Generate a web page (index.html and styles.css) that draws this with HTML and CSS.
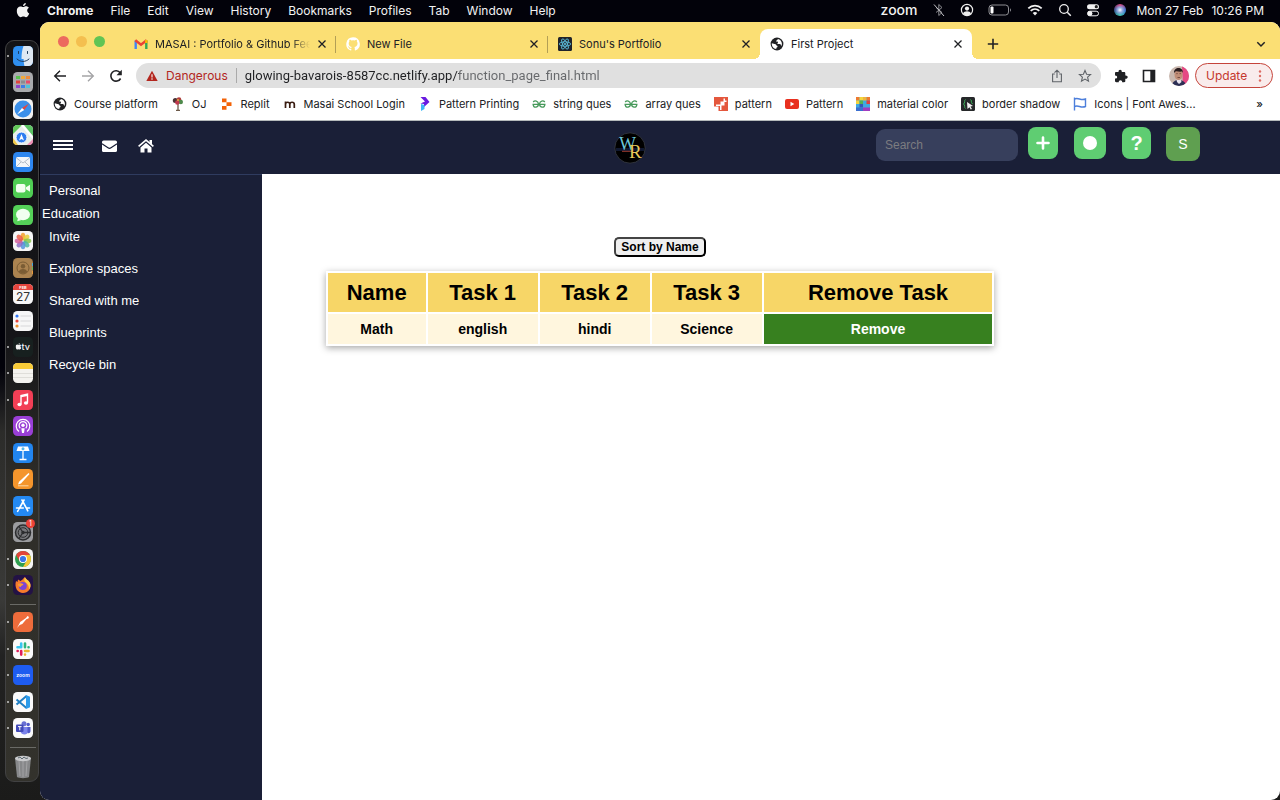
FILE: index.html
```html
<!DOCTYPE html>
<html lang="en">
<head>
  <meta charset="UTF-8">
  <meta name="viewport" content="width=device-width, initial-scale=1.0">
  <title>First Project</title>
  <link rel="stylesheet" href="styles.css">
</head>
<body>

  <!-- shared icons -->
  <svg class="defs" width="0" height="0">
    <symbol id="globe" viewBox="0 0 14 14">
      <circle cx="7" cy="7" r="6.4" fill="#202124"/>
      <path d="M1.8 6.2c1.500 .2 2.300 1 3.700 1 .8.200.7 1.200 1.500 1.500.9.300.6 1.500-.300 1.800-.4.300-.3 1-.5 1.500C3.700 11.600 1.600 9.400 1.800 6.200z" fill="#fff"/>
      <path d="M8 1.900c-.2 1-1.700 1.100-1.800 2 .1.800 1.700.3 1.900 1.100.2.900-1.300 1-.6 1.700.8.600 2.200-.2 3 .6.500.600.300 1.300.9 1.700C12.700 6.500 11.500 2.600 8 1.900z" fill="#fff"/>
    </symbol>
    <symbol id="close" viewBox="0 0 10 10">
      <path d="M1.500 1.500l7 7M8.500 1.500l-7 7" stroke="#202124" stroke-width="1.300" fill="none"/>
    </symbol>
    <symbol id="geeks" viewBox="0 0 14 14">
      <path d="M.5 7.300h13M1.200 5c1.500-1.800 5-1.300 5.200 1.800.3 4-4.600 4.600-5.200 1M12.800 5c-1.500-1.800-5-1.300-5.200 1.800-.3 4 4.600 4.600 5.200 1" stroke="#46995a" stroke-width="1.300" fill="none"/>
    </symbol>
    <symbol id="apple" viewBox="0 0 14 16">
      <path d="M10 0c.1 1.700-1.300 3.300-3 3.300C6.800 1.700 8.400.2 10 0zM7.200 4.300c.7 0 1.600-.8 3-.8 1.200 0 2.300.6 3 1.600-2.500 1.600-2.100 4.900.5 6-.7 1.900-2.100 4-3.500 4-1.100 0-1.500-.7-2.800-.7s-1.700.7-2.800.7C2.500 15.100.3 11.500.3 8.300c0-3 1.900-4.700 3.900-4.700 1.300 0 2.200.7 3 .7z" fill="#f2f2f2"/>
    </symbol>
  </svg>

  <header class="menubar">
    <svg class="apple-logo" viewBox="0 0 14 16"><use href="#apple"/></svg>
    <button class="menu app-name">Chrome</button>
    <button class="menu">File</button>
    <button class="menu">Edit</button>
    <button class="menu">View</button>
    <button class="menu">History</button>
    <button class="menu">Bookmarks</button>
    <button class="menu">Profiles</button>
    <button class="menu">Tab</button>
    <button class="menu">Window</button>
    <button class="menu">Help</button>
    <div class="status">
      <span class="zoom-word">zoom</span>
      <svg class="status-icon" viewBox="0 0 14 14"><path d="M4 4.500l6 5-3.200 3V1.500l3.200 3-6 5" stroke="#8d8d92" fill="none"/><path d="M2 1.500l10 11.500" stroke="#c4c4c8" fill="none"/></svg>
      <svg class="status-icon" viewBox="0 0 14 14"><circle cx="7" cy="7" r="5.600" stroke="#eee" stroke-width="1.200" fill="none"/><circle cx="7" cy="5.600" r="2.100" fill="#eee"/><path d="M3 10.500c1-3 7-3 8 0-2 2.600-6 2.600-8 0z" fill="#eee"/></svg>
      <svg class="battery" viewBox="0 0 24 12"><rect x="1" y="1" width="19.500" height="10" rx="3" stroke="#8e8e93" fill="none"/><rect x="2.500" y="2.500" width="3" height="7" rx="1" fill="#fff"/><path d="M22 4.300v3.400c1.300-.6 1.300-2.800 0-3.400z" fill="#8e8e93"/></svg>
      <svg class="wifi" viewBox="0 0 16 14"><path d="M1.300 5.400c3.800-3.700 9.600-3.700 13.400 0M3.700 7.900c2.500-2.400 6.100-2.400 8.600 0" stroke="#f2f2f2" stroke-width="1.800" fill="none"/><path d="M5.700 10c1.400-1.300 3.200-1.300 4.600 0L8 12.400z" fill="#f2f2f2"/></svg>
      <svg class="status-icon" viewBox="0 0 14 14"><circle cx="6" cy="6" r="4.300" stroke="#eee" stroke-width="1.300" fill="none"/><path d="M9.300 9.300l3.500 3.500" stroke="#eee" stroke-width="1.500"/></svg>
      <svg class="status-icon" viewBox="0 0 14 14"><rect x="1" y="1.200" width="12" height="5" rx="2.500" fill="#f2f2f2"/><circle cx="10.300" cy="3.700" r="1.600" fill="#222"/><rect x="1.500" y="8.200" width="11" height="4.600" rx="2.300" stroke="#f2f2f2" fill="none"/><circle cx="4" cy="10.500" r="2.400" fill="#f2f2f2"/></svg>
      <span class="siri"></span>
      <span class="clock"><span>Mon 27 Feb</span><span>10:26 PM</span></span>
    </div>
  </header>

  <div class="desktop">

    <aside class="dock">
      <div class="dock-group main-apps">
        <!-- finder -->
        <span class="app running"><svg viewBox="0 0 20 20"><rect width="20" height="20" rx="4.500" fill="#2f8ff0"/><path d="M10.500 0h5A4.500 4.500 0 0 1 20 4.500v11a4.500 4.500 0 0 1-4.500 4.500h-4c-.7-2.500-.9-5-.9-7H8.500C8.500 8 9 4 10.500 0z" fill="#dfe9f3"/><path d="M5.500 5.500v2M14.500 5.500v2M4 13c3.300 3.300 8.700 3.300 12 0" stroke="#1c3a5c" fill="none" stroke-linecap="round"/></svg></span>
        <!-- launchpad -->
        <span class="app"><svg viewBox="0 0 20 20"><rect width="20" height="20" rx="4.500" fill="#a9aaad"/><g><path d="M3 4h4v3H3z" fill="#59c34f"/><path d="M8 4h4v3H8z" fill="#f0a93a"/><path d="M13 4h4v3h-4z" fill="#ef8a3c"/><path d="M3 8.500h4v3H3z" fill="#e0443c"/><path d="M8 8.500h4v3H8z" fill="#8b8c90"/><path d="M13 8.500h4v3h-4z" fill="#e84a6a"/><path d="M3 13h4v3H3z" fill="#8e44c9"/><path d="M8 13h4v3H8z" fill="#3b7fe8"/><path d="M13 13h4v3h-4z" fill="#4fc3d9"/></g></svg></span>
        <!-- safari -->
        <span class="app"><svg viewBox="0 0 20 20"><rect width="20" height="20" rx="4.500" fill="#f1f1f1"/><circle cx="10" cy="10" r="8.500" fill="#3a8fea"/><path d="M16 4.500L11.200 11 9 9z" fill="#e8453c"/><path d="M4 15.500L9 9l2.200 2z" fill="#fff"/></svg></span>
        <!-- maps -->
        <span class="app"><svg viewBox="0 0 20 20"><rect width="20" height="20" rx="4.500" fill="#e9efe9"/><path d="M0 9V4.500A4.500 4.500 0 0 1 4.500 0H9z" fill="#62c858"/><path d="M11 0h4.500A4.500 4.500 0 0 1 20 4.500V11z" fill="#5cc463"/><path d="M9 0l11 13" stroke="#fff" stroke-width="2"/><path d="M0 13l5 7h-1A4 4 0 0 1 0 16z" fill="#f3c948"/><path d="M14 20l6-6v2a4 4 0 0 1-4 4z" fill="#ef8fb4"/><circle cx="8.500" cy="12.500" r="5.500" fill="#2f7df0" stroke="#fff"/><path d="M8.500 9l2.500 6.500-2.500-1.500L6 15.500z" fill="#fff"/></svg></span>
        <!-- mail -->
        <span class="app"><svg viewBox="0 0 20 20"><rect width="20" height="20" rx="4.500" fill="#2d86ee"/><rect x="3" y="5" width="14" height="10" rx="1.500" fill="#f3f6f9"/><path d="M3.500 6l6.500 5 6.500-5M3.500 14.500L8 10M16.500 14.500L12 10" stroke="#9aa6b3" stroke-width=".7" fill="none"/></svg></span>
        <!-- facetime -->
        <span class="app"><svg viewBox="0 0 20 20"><rect width="20" height="20" rx="4.500" fill="#4fce53"/><rect x="3" y="6" width="9.500" height="8.500" rx="2" fill="#f2fff0"/><path d="M13 9.300l4-2.500v7l-4-2.500z" fill="#f2fff0"/></svg></span>
        <!-- messages -->
        <span class="app"><svg viewBox="0 0 20 20"><rect width="20" height="20" rx="4.500" fill="#55d158"/><ellipse cx="10" cy="9.500" rx="7" ry="5.800" fill="#f0fff0"/><path d="M5 13l-.8 3.300L8.500 15z" fill="#f0fff0"/></svg></span>
        <!-- photos -->
        <span class="app"><svg viewBox="0 0 20 20"><rect width="20" height="20" rx="4.500" fill="#f6f6f6"/><g fill-opacity=".85"><ellipse cx="10" cy="5.500" rx="2.400" ry="3.800" fill="#f5a02c"/><ellipse cx="10" cy="5.500" rx="2.400" ry="3.800" fill="#e7cf3b" transform="rotate(45 10 10)"/><ellipse cx="10" cy="5.500" rx="2.400" ry="3.800" fill="#8ac64b" transform="rotate(90 10 10)"/><ellipse cx="10" cy="5.500" rx="2.400" ry="3.800" fill="#4db7a0" transform="rotate(135 10 10)"/><ellipse cx="10" cy="5.500" rx="2.400" ry="3.800" fill="#5494dd" transform="rotate(180 10 10)"/><ellipse cx="10" cy="5.500" rx="2.400" ry="3.800" fill="#8b6fc7" transform="rotate(225 10 10)"/><ellipse cx="10" cy="5.500" rx="2.400" ry="3.800" fill="#d4609d" transform="rotate(270 10 10)"/><ellipse cx="10" cy="5.500" rx="2.400" ry="3.800" fill="#ec5f4b" transform="rotate(315 10 10)"/></g></svg></span>
        <!-- contacts -->
        <span class="app"><svg viewBox="0 0 20 20"><rect width="20" height="20" rx="4.500" fill="#ab8350"/><circle cx="10" cy="10" r="6" fill="none" stroke="#7a5c34"/><circle cx="10" cy="8.200" r="2.200" fill="#7a5c34"/><path d="M5.800 13.500c1.500-3.300 6.900-3.300 8.400 0-2 2.800-6.400 2.800-8.400 0z" fill="#7a5c34"/><path d="M19.500 5v3" stroke="#4aa6d8"/><path d="M19.500 9v3" stroke="#65bd5c"/><path d="M19.500 13v3" stroke="#e89a3c"/></svg></span>
        <!-- calendar -->
        <span class="app"><svg viewBox="0 0 20 20"><rect width="20" height="20" rx="4.500" fill="#f7f7f7"/><path d="M0 6V4.500A4.500 4.500 0 0 1 4.500 0h11A4.500 4.500 0 0 1 20 4.500V6z" fill="#e4453d"/><text x="10" y="4.900" class="cal-month">FEB</text><text x="10" y="16.700" class="cal-day">27</text></svg></span>
        <!-- reminders -->
        <span class="app"><svg viewBox="0 0 20 20"><rect width="20" height="20" rx="4.500" fill="#f7f7f7"/><circle cx="4" cy="5" r="1.600" fill="#3478f6"/><circle cx="4" cy="10" r="1.600" fill="#e8453c"/><circle cx="4" cy="15" r="1.600" fill="#f0912f"/><path d="M7.500 5H18M7.500 10H18M7.500 15H18" stroke="#cfcfd2" stroke-width=".8"/></svg></span>
        <!-- tv -->
        <span class="app running"><svg viewBox="0 0 20 20"><rect width="20" height="20" rx="4.500" fill="#17201f"/><use href="#apple" x="2.500" y="6" width="6" height="7"/><text x="8.500" y="13" class="tv-word">tv</text></svg></span>
        <!-- notes -->
        <span class="app running"><svg viewBox="0 0 20 20"><rect width="20" height="20" rx="4.500" fill="#f4f3ef"/><path d="M0 6V4.500A4.500 4.500 0 0 1 4.500 0h11A4.500 4.500 0 0 1 20 4.500V6z" fill="#f8cb38"/><path d="M0 10.500h20M0 14.500h20" stroke="#d5d4d0" stroke-width=".7"/></svg></span>
        <!-- music -->
        <span class="app running"><svg viewBox="0 0 20 20"><rect width="20" height="20" rx="4.500" fill="#f23f55"/><path d="M8 14.200V5.600l6.500-1.400v8.600" stroke="#fff" stroke-width="1.400" fill="none"/><path d="M8 6.600l6.500-1.400" stroke="#fff" stroke-width="1.500"/><ellipse cx="6.500" cy="14.500" rx="2.100" ry="1.700" fill="#fff"/><ellipse cx="13" cy="13" rx="2.100" ry="1.700" fill="#fff"/></svg></span>
        <!-- podcasts -->
        <span class="app"><svg viewBox="0 0 20 20"><rect width="20" height="20" rx="4.500" fill="#9a3fd6"/><path d="M6 15.600a6.800 6.800 0 1 1 8 0M7.300 12.300a3.900 3.900 0 1 1 5.400 0" stroke="#fff" stroke-width="1.200" fill="none"/><circle cx="10" cy="9.300" r="1.700" fill="#fff"/><path d="M8.300 12.300h3.400L11 17H9z" fill="#fff"/></svg></span>
        <!-- keynote -->
        <span class="app"><svg viewBox="0 0 20 20"><rect width="20" height="20" rx="4.500" fill="#2285ee"/><path d="M5 3.500h10l1.500 4.500h-13z" fill="#fff"/><circle cx="10" cy="5.800" r="1.500" fill="#58b8e8"/><path d="M10 8v8M6.500 16.500h7" stroke="#fff" stroke-width="1.300"/></svg></span>
        <!-- pages -->
        <span class="app"><svg viewBox="0 0 20 20"><rect width="20" height="20" rx="4.500" fill="#f4952c"/><path d="M15.500 4l1 1-8.500 9.500-3 1 1-2.700z" fill="#fff"/><path d="M5 16.800h10.500" stroke="#fbd9a8"/></svg></span>
        <!-- app store -->
        <span class="app"><svg viewBox="0 0 20 20"><rect width="20" height="20" rx="4.500" fill="#2489f2"/><path d="M11 4L6 13M9 4l5.800 10.800M3.500 12h6.800M13.200 12h3.300M5.200 14.300l-.6 1" stroke="#fff" stroke-width="1.600" stroke-linecap="round" fill="none"/></svg></span>
        <!-- settings -->
        <span class="app"><svg viewBox="0 0 20 20"><rect width="20" height="20" rx="4.500" fill="#9b9c9f"/><circle cx="10" cy="10.500" r="7.500" fill="#77787b" stroke="#2c2d2f" stroke-width="1.500"/><circle cx="10" cy="10.500" r="4.800" fill="none" stroke="#2c2d2f"/><path d="M10 10.500h7M10 10.500l-4-6M10 10.500l-4 6" stroke="#2c2d2f" stroke-width="1.300"/><circle cx="10" cy="10.500" r="1.700" fill="#2c2d2f"/></svg><b class="badge">1</b></span>
        <!-- chrome -->
        <span class="app running"><svg viewBox="0 0 20 20"><rect width="20" height="20" rx="4.500" fill="#f4f4f4"/><circle cx="10" cy="10" r="8" fill="#2f9e4f"/><path d="M3.100 6a8 8 0 0 1 13.800 0H10L6.500 12z" fill="#e2453a"/><path d="M16.900 6A8 8 0 0 1 10 18l3.500-6L10 6z" fill="#f7c632"/><circle cx="10" cy="10" r="4" fill="#fff"/><circle cx="10" cy="10" r="3.100" fill="#3b78e7"/></svg></span>
        <!-- firefox -->
        <span class="app running"><svg viewBox="0 0 20 20"><rect width="20" height="20" rx="4.500" fill="#231245"/><path d="M3 6l1.500 1L5 4.500 7.500 6C9 5 10 4 12 2c.3 2 3.500 3 5 6 2 5-2 10-7 10S1 13 3 6z" fill="#f77b2c"/><path d="M12 2c.3 2 3.500 3 5 6 1 3 .3 5-1 6.500.3-4-2-6-4-7.500-1-1.500-.8-3.500 0-5z" fill="#fdcb45"/><circle cx="9.800" cy="11" r="4" fill="#7a45d6"/><path d="M5 9c2-1.500 4 0 5.500 0-.5 1.500-2.500 1.500-2.800 3C6 12 5 11 5 9z" fill="#fb9a33"/></svg></span>
      </div>
      <hr class="dock-line">
      <div class="dock-group other-apps">
        <!-- postman -->
        <span class="app running"><svg viewBox="0 0 20 20"><rect width="20" height="20" rx="4.500" fill="#ee6c3b"/><path d="M14.500 4c1.500.2 1.700 1.800.8 2.600l-2 .6-4 4.800-2.600 1L4 16l2.200-4 1-2L13 6z" fill="#fff"/></svg></span>
        <!-- slack -->
        <span class="app running"><svg viewBox="0 0 20 20"><rect width="20" height="20" rx="4.500" fill="#fafafa"/><g fill="none" stroke-width="2.600" stroke-linecap="round"><path d="M8.200 4.500v3.700M4.500 8.200H8" stroke="#36c5f0"/><path d="M12 4.500v3.700M15.500 8.200h.1" stroke="#2eb67d"/><path d="M12 12h3.500M12 15.500v.1" stroke="#ecb22e"/><path d="M8.200 12v3.600M4.600 12h.1" stroke="#e01e5a"/></g></svg></span>
        <!-- zoom -->
        <span class="app running"><svg viewBox="0 0 20 20"><rect width="20" height="20" rx="4.500" fill="#1e5cf0"/><text x="10" y="12" class="zoom-small">zoom</text></svg></span>
        <!-- vs code -->
        <span class="app running"><svg viewBox="0 0 20 20"><rect width="20" height="20" rx="4.500" fill="#fafafa"/><path d="M3.500 7.500l10 8.500M3.500 12.500l10-8.500" stroke="#1f7fc4" stroke-width="2"/><path d="M13 3l4 1.800v10.400L13 17z" fill="#2b9bea"/></svg></span>
        <!-- teams -->
        <span class="app running"><svg viewBox="0 0 20 20"><rect width="20" height="20" rx="4.500" fill="#fafafa"/><circle cx="11" cy="5.700" r="2.500" fill="#6970d4"/><circle cx="15.200" cy="6.500" r="1.700" fill="#5059c9"/><path d="M7.500 9H15v4.500c0 4-7 4-7.500 0z" fill="#7b83eb"/><path d="M14.500 9h3v4c0 2-1.800 2.500-3 2z" fill="#5059c9"/><rect x="3" y="6.500" width="7.500" height="7.500" rx="1" fill="#4149b8"/><path d="M5 8.600h3.600M6.800 8.600v3.700" stroke="#fff"/></svg></span>
      </div>
      <hr class="dock-line">
      <svg class="trash" viewBox="0 0 20 24"><path d="M2 3l2 19c2 1.500 10 1.500 12 0l2-19z" fill="#87888a"/><path d="M6 6l1 15M10 6v16M14 6l-1 15" stroke="#a9aaac" stroke-width=".8"/><ellipse cx="10" cy="3.500" rx="8" ry="2.700" fill="#c9cacc"/><path d="M5 3l2-1 2 2 2-2 2 1.500L15 3" stroke="#5d6a70" fill="none"/></svg>
    </aside>

    <section class="window">

      <div class="tabstrip">
        <div class="lights"><i class="red"></i><i class="amber"></i><i class="green"></i></div>
        <div class="tab">
          <svg class="favicon" viewBox="0 0 14 14"><path d="M1.700 12V3.500" stroke="#4285f4" stroke-width="2.400"/><path d="M12.300 12V3.500" stroke="#34a853" stroke-width="2.400"/><path d="M1.300 3.300L7 7.700l5.700-4.400" stroke="#ea4335" stroke-width="2.600" fill="none"/><path d="M12.300 6V3" stroke="#fbbc04" stroke-width="2.400"/></svg>
          <span class="tab-title fade">MASAI : Portfolio &amp; Github Feed</span>
          <button class="tab-close" aria-label="Close"><svg viewBox="0 0 10 10"><use href="#close"/></svg></button>
        </div>
        <div class="tab">
          <svg class="favicon" viewBox="0 0 14 14"><path d="M7 .3a6.800 6.800 0 0 0-2.200 13.200c.4.100.5-.1.500-.4v-1.400c-1.900.4-2.300-.8-2.300-.8-.3-.8-.8-1-.8-1-.6-.4.100-.4.100-.4.700 0 1.100.7 1.100.7.600 1 1.600.7 2 .6.100-.5.300-.8.500-.9-1.600-.2-3.200-.8-3.200-3.400 0-.8.3-1.400.7-1.900-.1-.2-.3-.9.100-1.800 0 0 .6-.2 1.900.7a6.500 6.500 0 0 1 3.400 0c1.300-.9 1.900-.7 1.900-.7.400.9.200 1.600.1 1.800.5.500.7 1.100.7 1.900 0 2.600-1.600 3.200-3.100 3.400.2.200.4.600.4 1.300v1.900c0 .2.100.5.500.4A6.800 6.800 0 0 0 7 .3z" fill="#fff"/></svg>
          <span class="tab-title">New File</span>
          <button class="tab-close" aria-label="Close"><svg viewBox="0 0 10 10"><use href="#close"/></svg></button>
        </div>
        <div class="tab">
          <svg class="favicon" viewBox="0 0 14 14"><rect width="14" height="14" rx="1.500" fill="#20232a"/><g fill="none" stroke="#61c9e8" stroke-width=".8"><ellipse cx="7" cy="7" rx="5.700" ry="2.200"/><ellipse cx="7" cy="7" rx="5.700" ry="2.200" transform="rotate(60 7 7)"/><ellipse cx="7" cy="7" rx="5.700" ry="2.200" transform="rotate(120 7 7)"/></g><circle cx="7" cy="7" r="1" fill="#61c9e8"/></svg>
          <span class="tab-title">Sonu's Portfolio</span>
          <button class="tab-close" aria-label="Close"><svg viewBox="0 0 10 10"><use href="#close"/></svg></button>
        </div>
        <div class="tab active">
          <svg class="favicon" viewBox="0 0 14 14"><use href="#globe"/></svg>
          <span class="tab-title">First Project</span>
          <button class="tab-close" aria-label="Close"><svg viewBox="0 0 10 10"><use href="#close"/></svg></button>
        </div>
        <button class="new-tab" aria-label="New tab"><svg viewBox="0 0 12 12"><path d="M6 .8v10.400M.8 6h10.400" stroke="#202124" stroke-width="1.600"/></svg></button>
        <button class="tab-search" aria-label="Search tabs"><svg viewBox="0 0 12 12"><path d="M2.300 4.300L6 8l3.700-3.700" stroke="#202124" stroke-width="1.500" fill="none"/></svg></button>
      </div>

      <div class="toolbar">
        <button class="tool" aria-label="Back"><svg viewBox="0 0 16 16"><path d="M14 8H2.800M8 2.700L2.700 8 8 13.300" stroke="#202124" stroke-width="1.400" fill="none"/></svg></button>
        <button class="tool" aria-label="Forward"><svg viewBox="0 0 16 16"><path d="M2 8h11.200M8 2.700L13.300 8 8 13.300" stroke="#a5a5a7" stroke-width="1.400" fill="none"/></svg></button>
        <button class="tool" aria-label="Reload"><svg viewBox="0 0 16 16"><path d="M12.600 10.500A5.200 5.200 0 1 1 12.200 4.800" stroke="#202124" stroke-width="1.600" fill="none"/><path d="M13.800 1.800v5.400H8.500z" fill="#202124"/></svg></button>
        <div class="omnibox">
          <svg class="warn" viewBox="0 0 12 12"><path d="M6 .8L11.700 11H.3z" fill="#b3261e"/><path d="M6 4.300v3.200M6 8.300v1.400" stroke="#fff" stroke-width="1.100"/></svg>
          <label class="danger" for="url">Dangerous</label>
          <input class="url" id="url" type="text" value="glowing-bavarois-8587cc.netlify.app/function_page_final.html">
          <svg class="omni-icon" viewBox="0 0 14 14"><path d="M4.800 5H2.600v7.800h8.800V5H9.200M7 9V1.300M4.500 3.600L7 1.200l2.500 2.400" stroke="#5f6368" stroke-width="1.100" fill="none"/></svg>
          <svg class="omni-icon" viewBox="0 0 14 14"><path d="M7 1.500l1.600 3.700 4 .3-3 2.700.9 4L7 10.100l-3.500 2.100.9-4-3-2.700 4-.3z" stroke="#5f6368" stroke-width="1.100" fill="none"/></svg>
        </div>
        <button class="tool" aria-label="Extensions"><svg viewBox="0 0 16 16"><path d="M2 5.300c0-.8.400-1.200 1.200-1.200h2.300c-.4-3.300 3.700-3.300 3.300 0h2.300c.8 0 1.200.4 1.200 1.200v2.200c3.200-.3 3.200 3.600 0 3.300v2.300c0 .8-.4 1.200-1.200 1.200H9.200c.2-2.900-3.700-2.900-3.500 0H3.200c-.8 0-1.200-.4-1.200-1.200v-2.500c2.900.2 2.900-3.300 0-3.100z" fill="#202124"/></svg></button>
        <button class="tool" aria-label="Side panel"><svg viewBox="0 0 16 16"><path d="M1.700 1.700h12.600v12.600H1.700zM3.300 3.300v9.400h6V3.300z" fill="#202124" fill-rule="evenodd"/></svg></button>
        <div class="profile">
          <svg class="avatar" viewBox="0 0 20 20"><defs><clipPath id="face"><circle cx="10" cy="10" r="10"/></clipPath></defs><g clip-path="url(#face)"><path d="M0 0h20v20H0z" fill="#c9b7ae"/><path d="M13 0h7v20h-6z" fill="#e54883"/><path d="M3 20c0-5 4-6 7-6s7 2 7 6z" fill="#2c2f55"/><path d="M7.500 13h4l1 3-2.500 2-2-2z" fill="#e9e4ee"/><ellipse cx="9.500" cy="8.500" rx="4" ry="5.500" fill="#c08d76"/><path d="M5 7c-.5-6 9-7 9 0l-1-1.500c-3 .5-5-.5-6.500 0z" fill="#2a1c1e"/><path d="M7.300 7.600h1.400M10.500 7.600h1.400M8.500 11.500h2.500" stroke="#5a3530" stroke-width=".7"/></g></svg>
          <button class="update">Update<svg viewBox="0 0 4 14"><circle cx="2" cy="2.500" r="1.200" fill="#dd6b62"/><circle cx="2" cy="7" r="1.200" fill="#dd6b62"/><circle cx="2" cy="11.500" r="1.200" fill="#dd6b62"/></svg></button>
        </div>
      </div>

      <nav class="bookmarks">
        <a href="#"><svg viewBox="0 0 14 14"><use href="#globe"/></svg>Course platform</a>
        <a href="#"><svg viewBox="0 0 14 14"><path d="M7 5v9M5 13.500h4" stroke="#6d5a4a" stroke-width="1.300"/><circle cx="4.300" cy="3.500" r="2.500" fill="#4a3436"/><circle cx="8" cy="2.500" r="2.300" fill="#b03a3a"/><circle cx="9.800" cy="5" r="2.200" fill="#4f8a4c"/><circle cx="6.300" cy="5.500" r="2.200" fill="#c0394f"/><circle cx="7" cy="3" r="1" fill="#e9a83c"/></svg>OJ</a>
        <a href="#"><svg viewBox="0 0 14 14"><path d="M2 1.500h4.500v3.700H2zM6.500 5.200H11.500v3.900H6.500zM2 9.100h4.500v3.700H2z" fill="#f26207"/></svg>Replit</a>
        <a href="#"><svg viewBox="0 0 14 14"><path d="M2.500 11V4.500M2.500 7.500c0-3 4.300-3 4.300 0V11M6.800 7.500c0-3 4.500-3 4.500 0V11" stroke="#3a1d12" stroke-width="1.700" fill="none"/></svg>Masai School Login</a>
        <a href="#"><svg viewBox="0 0 14 14"><path d="M2.500 0h5L11.500 5 6 10V7l-3.500-.5L7 4.500z" fill="#6a1be0"/><path d="M3 7l3.500 1v4L3 14z" fill="#3db8f5"/></svg>Pattern Printing</a>
        <a href="#"><svg viewBox="0 0 14 14"><use href="#geeks"/></svg>string ques</a>
        <a href="#"><svg viewBox="0 0 14 14"><use href="#geeks"/></svg>array ques</a>
        <a href="#"><svg viewBox="0 0 14 14"><path d="M0 0h14v14H4.500v-4.500H0z" fill="#e4573d"/><path d="M9.500 1.500v3h-3v3H2V9h4v4h1.500V8.500h3V5h2V3.500h-1.500v-2z" fill="#fff"/></svg>pattern</a>
        <a href="#"><svg viewBox="0 0 14 14"><rect y="2" width="14" height="10" rx="2" fill="#e8301f"/><path d="M5.500 4.800v4.400L9.300 7z" fill="#fff"/></svg>Pattern</a>
        <a href="#"><svg viewBox="0 0 14 14"><path d="M0 0h14v14H0z" fill="#3fa9e0"/><path d="M0 0h3.500v3.500H0zM10.500 0H14v3.500h-3.500z" fill="#ee7a30"/><path d="M3.500 0H7v3.500H3.500z" fill="#f3d53d"/><path d="M7 0h3.500v3.500H7z" fill="#f0b53b"/><path d="M0 3.500h3.500V7H0z" fill="#f5d33b"/><path d="M3.500 3.500H7V7H3.500z" fill="#52b255"/><path d="M10.500 3.500H14V7h-3.500z" fill="#e03f3f"/><path d="M3.500 7H7v3.500H3.500z" fill="#3656b8"/><path d="M0 10.500h7V14H0z" fill="#3b6fd0"/><path d="M7 10.500h7V14H7z" fill="#a13cc0"/></svg>material color</a>
        <a href="#"><svg viewBox="0 0 14 14"><rect width="14" height="14" rx="1.500" fill="#26282a"/><path d="M4.500 2.500C3 3 4.500 6 2.500 7c2 1 .5 4 2 4.500M9.500 2.500C11 3 9.500 5 11.500 7" stroke="#3cb55a" fill="none"/><path d="M6 5l6 4-2.500.5L11 12l-1.300.5-1.200-2.300L6.500 12z" fill="#f2f2f2"/></svg>border shadow</a>
        <a href="#"><svg viewBox="0 0 14 14"><path d="M1.500.500V13.500M1.500 2c4-2 6 2 11 0v7.500c-5 2-7-2-11 0" stroke="#4d7fdb" stroke-width="1.400" fill="none"/></svg>Icons | Font Awes...</a>
        <button class="more">»</button>
      </nav>

      <div class="page">
        <div class="navbar">
          <div class="nav-left">
            <button aria-label="Menu"><svg class="bars" viewBox="0 0 20 10"><path d="M0 1h20M0 5h20M0 9h20" stroke="#fff" stroke-width="1.800"/></svg></button>
            <button aria-label="Mail"><svg class="mail" viewBox="0 0 15 14"><rect y="1.500" width="15" height="11.500" rx="1.600" fill="#fff"/><path d="M0 4.800l6 4c1 .7 2 .7 3 0l6-4" stroke="#1a1f37" stroke-width="1.100" fill="none"/></svg></button>
            <button aria-label="Home"><svg class="home" viewBox="0 0 16 14"><path d="M.6 7.300L8 1.100l7.400 6.200" stroke="#fff" stroke-width="1.600" fill="none"/><path d="M11.500 1H14v4.500l-2.500-2zM8 3.800l5.500 4.700V13.500h-4v-4h-3v4h-4V8.500z" fill="#fff"/></svg></button>
          </div>
          <svg class="logo" viewBox="0 0 32 32"><circle cx="16" cy="16" r="15.200" fill="#000" stroke="#3a3d48" stroke-width=".8"/><path d="M2 16h28v3H2z" fill="#101830"/><path d="M8 19.300h10" stroke="#c44a3c" stroke-width=".8"/><text x="5" y="18" class="logo-w">W</text><text x="15" y="26" class="logo-r">R</text></svg>
          <div class="nav-right">
            <input class="search" type="search" placeholder="Search" aria-label="Search">
            <button class="sq plus" aria-label="Add"><svg viewBox="0 0 14 14"><path d="M7 1.500v11M1.500 7h11" stroke="#fff" stroke-width="2.600" stroke-linecap="round"/></svg></button>
            <button class="sq dot" aria-label="Notifications"><svg viewBox="0 0 14 14"><circle cx="7" cy="7" r="7" fill="#fff"/></svg></button>
            <button class="sq help">?</button>
            <button class="sq user">S</button>
          </div>
        </div>

        <div class="body">
          <div class="sidebar">
            <a href="#">Personal</a>
            <a href="#" class="education">Education</a>
            <a href="#">Invite</a>
            <a href="#" class="spaced">Explore spaces</a>
            <a href="#" class="spaced">Shared with me</a>
            <a href="#" class="spaced">Blueprints</a>
            <a href="#" class="spaced">Recycle bin</a>
          </div>

          <main class="content">
            <button class="sort">Sort by Name</button>
            <table class="tasks">
              <thead>
                <tr>
                  <th class="col-name">Name</th>
                  <th class="col-task">Task 1</th>
                  <th class="col-task">Task 2</th>
                  <th class="col-task">Task 3</th>
                  <th>Remove Task</th>
                </tr>
              </thead>
              <tbody>
                <tr>
                  <td>Math</td>
                  <td>english</td>
                  <td>hindi</td>
                  <td>Science</td>
                  <td class="remove"><button>Remove</button></td>
                </tr>
              </tbody>
            </table>
          </main>
        </div>
      </div>

    </section>
  </div>

</body>
</html>
```

FILE: styles.css
```css
* {
  box-sizing: border-box;
}

body {
  margin: 0;
  height: 100vh;
  display: flex;
  flex-direction: column;
  overflow: hidden;
  background: linear-gradient(#02020a 0, #02020a 46%, #2c2c2a 54%, #3a3a38 75%, #222 82%, #1b1b1a 100%);
  font-family: Inter, "Liberation Sans", sans-serif;
}

button {
  padding: 0;
  border: 0;
  background: none;
  font: inherit;
  color: inherit;
}

button svg {
  display: block;
}

a {
  color: inherit;
  text-decoration: none;
}

.defs {
  position: absolute;
}

/* menu bar */
.menubar {
  display: flex;
  align-items: center;
  gap: 17px;
  height: 22px;
  padding: 0 16px 2px;
  background: #02020a;
  color: #f2f2f2;
  font-size: 12px;
  white-space: nowrap;
}

.apple-logo {
  width: 14px;
  height: 15px;
}

.app-name {
  font-weight: 700;
}

.status {
  display: flex;
  align-items: center;
  gap: 14px;
  margin-left: auto;
}

.zoom-word {
  font-size: 14px;
  font-weight: 500;
  line-height: 16px;
}

.status-icon {
  width: 14px;
  height: 14px;
}

.battery {
  width: 24px;
  height: 12px;
}

.wifi {
  width: 16px;
  height: 14px;
  margin: 0 1px;
}

.siri {
  width: 12px;
  height: 12px;
  border-radius: 50%;
  background: radial-gradient(circle, #fff 0, #8fa8dd 30%, transparent 60%), conic-gradient(#d8477f, #3b6fd0, #3fc7b0, #35508f, #d8477f);
}

.clock {
  display: flex;
  gap: 8px;
  margin-left: -3px;
}

.desktop {
  flex: 1;
  min-height: 0;
  display: flex;
}

/* dock */
.dock {
  flex: none;
  width: 34px;
  margin: 18px 1px 18px 5px;
  padding: 5px 0 2px 2px;
  display: flex;
  flex-direction: column;
  align-items: center;
  border: 1px solid #414142;
  border-radius: 9px;
  background: linear-gradient(#141417 0, #151518 40%, #2e2d29 60%, #33322c 100%);
}

.dock-group {
  display: flex;
  flex-direction: column;
  justify-content: space-between;
}

.main-apps {
  flex: 5 0 auto;
}

.other-apps {
  flex: 1 0 auto;
}

.app {
  position: relative;
  width: 20px;
  height: 20px;
}

.app svg {
  display: block;
  width: 20px;
  height: 20px;
}

.running::before {
  content: "";
  position: absolute;
  left: -6px;
  top: 9px;
  width: 2px;
  height: 2px;
  border-radius: 50%;
  background: #c8c8c8;
}

.badge {
  position: absolute;
  top: -3px;
  right: -2px;
  width: 9px;
  height: 9px;
  border-radius: 50%;
  background: #ec4238;
  color: #fff;
  font-size: 7px;
  font-weight: 400;
  line-height: 9px;
  text-align: center;
}

.dock-line {
  width: 26px;
  height: 1px;
  margin: 9px 0 7px;
  border: 0;
  background: #6a6a66;
}

.trash {
  width: 20px;
  height: 24px;
}

.cal-month {
  fill: #fff;
  font-size: 4px;
  font-weight: 600;
  text-anchor: middle;
}

.cal-day {
  fill: #333;
  font-size: 12px;
  text-anchor: middle;
}

.tv-word {
  fill: #f2f2f2;
  font-size: 9px;
  font-weight: 500;
}

.zoom-small {
  fill: #fff;
  font-size: 5px;
  font-weight: 600;
  text-anchor: middle;
}

/* browser window */
.window {
  flex: 1;
  min-width: 0;
  display: flex;
  flex-direction: column;
  overflow: hidden;
  border-radius: 9px;
  background: #fff;
  color: #202124;
  font-size: 11px;
}

.tabstrip {
  display: flex;
  height: 37px;
  padding: 7px 13px 0 18px;
  background: #fbdf74;
}

.lights {
  display: flex;
  gap: 7px;
  width: 66px;
  padding-top: 7px;
}

.lights i {
  width: 11px;
  height: 11px;
  border-radius: 50%;
}

.red {
  background: #ec6a5e;
}

.amber {
  background: #f4bf4f;
}

.green {
  background: #61c454;
}

.tab {
  position: relative;
  display: flex;
  align-items: center;
  gap: 7px;
  width: 212px;
  padding: 0 9px 0 10px;
  border-radius: 8px 8px 0 0;
}

.tab:not(.active)::after {
  content: "";
  position: absolute;
  right: 0;
  top: 7px;
  width: 1px;
  height: 17px;
  background: #b39f55;
}

.tab:nth-child(4)::after {
  display: none;
}

.favicon {
  width: 14px;
  height: 14px;
}

.tab-title {
  flex: 1;
  overflow: hidden;
  white-space: nowrap;
}

.fade {
  -webkit-mask-image: linear-gradient(90deg, #000 88%, transparent);
  mask-image: linear-gradient(90deg, #000 88%, transparent);
}

.tab-close svg {
  width: 10px;
  height: 10px;
}

.active {
  background: #fff;
}

.active::before,
.active::after {
  content: "";
  position: absolute;
  bottom: 0;
  width: 6px;
  height: 6px;
}

.active::before {
  left: -6px;
  background: radial-gradient(circle at 0 0, #fbdf74 6px, #fff 6px);
}

.active::after {
  right: -6px;
  background: radial-gradient(circle at 100% 0, #fbdf74 6px, #fff 6px);
}

.new-tab {
  margin-left: 15px;
}

.new-tab svg,
.tab-search svg {
  width: 12px;
  height: 12px;
}

.tab-search {
  margin-left: auto;
}

.toolbar {
  display: flex;
  align-items: center;
  gap: 12px;
  padding: 4px 7px 3px 12px;
}

.tool svg {
  width: 16px;
  height: 16px;
}

.omnibox {
  flex: 1;
  display: flex;
  align-items: center;
  gap: 8px;
  height: 25px;
  padding: 0 9px 0 10px;
  border-radius: 13px;
  background: #e0e0e0;
  font-size: 12px;
}

.warn {
  width: 12px;
  height: 12px;
}

.danger {
  padding-right: 8px;
  border-right: 1px solid #aaa;
  color: #b3261e;
}

/* host in dark text, path in grey */
.url {
  flex: 1;
  min-width: 0;
  padding: 0;
  border: 0;
  outline: 0;
  font: 13px Roboto, sans-serif;
  color: #202124;
  background: linear-gradient(90deg, #202124 214px, #66686b 214px);
  -webkit-background-clip: text;
  background-clip: text;
  -webkit-text-fill-color: transparent;
}

.omni-icon {
  width: 14px;
  height: 14px;
  margin-left: 6px;
}

.profile {
  display: flex;
  align-items: center;
  gap: 6px;
}

.avatar {
  width: 20px;
  height: 20px;
}

.update {
  display: flex;
  align-items: center;
  justify-content: space-between;
  width: 78px;
  height: 25px;
  padding: 0 10px;
  border: 1px solid #c5443b;
  border-radius: 13px;
  background: #f9ecec;
  color: #c5372d;
  font-size: 12px;
}

.update svg {
  width: 4px;
  height: 14px;
}

.bookmarks {
  display: flex;
  align-items: center;
  gap: 13px;
  height: 30px;
  padding: 0 17px 4px 13px;
  border-bottom: 1px solid #b5babb;
  white-space: nowrap;
}

.bookmarks a {
  display: flex;
  align-items: center;
  gap: 7px;
}

.bookmarks svg {
  width: 14px;
  height: 14px;
}

.more {
  margin-left: auto;
  font-weight: 500;
}

/* task page */
.page {
  flex: 1;
  min-height: 0;
  display: flex;
  flex-direction: column;
  font-family: "Liberation Sans", Arial, sans-serif;
}

.navbar {
  display: flex;
  height: 53px;
  padding: 6px 80px 0 13px;
  background: #1a1f37;
  color: #fff;
}

.nav-left {
  display: flex;
  align-items: center;
  height: 36px;
  margin-right: 230px;
}

.bars {
  width: 20px;
  height: 10px;
}

.mail {
  width: 15px;
  height: 14px;
  margin: 2px 21px 0 29px;
}

.home {
  width: 16px;
  height: 14px;
  margin-top: 2px;
}

.logo {
  width: 32px;
  height: 32px;
  margin: 5px auto 0;
}

.logo-w {
  fill: #6cc5d8;
  font-family: "Liberation Serif", serif;
  font-size: 18px;
}

.logo-r {
  fill: #e8c95c;
  font-family: "Liberation Serif", serif;
  font-size: 19px;
}

.nav-right {
  display: flex;
  align-items: flex-start;
}

.search {
  width: 142px;
  height: 32px;
  margin: 2px 10px 0 0;
  padding: 0 9px;
  border: 0;
  border-radius: 9px;
  outline: 0;
  background: #373f5c;
  color: #fff;
  font: 12px "Liberation Sans", Arial, sans-serif;
}

.search::placeholder {
  color: #7c7c80;
}

.sq {
  display: flex;
  align-items: center;
  justify-content: center;
  height: 32px;
  border-radius: 8px;
  background: #5fcd72;
}

.sq svg {
  width: 14px;
  height: 14px;
}

.plus {
  width: 30px;
}

.dot {
  width: 32px;
  margin: 0 16px;
}

.help {
  width: 29px;
  margin-right: 15px;
  font-size: 20px;
  font-weight: 700;
}

.user {
  width: 34px;
  height: 34px;
  background: #5f9f50;
  font-size: 14px;
}

.body {
  flex: 1;
  display: flex;
}

.sidebar {
  display: flex;
  flex-direction: column;
  flex: none;
  width: 222px;
  padding: 8px 9px;
  border-top: 1px solid #2f3b5f;
  background: #1a1f37;
  color: #fff;
  font-size: 13px;
  line-height: 16px;
}

.education {
  margin: 7px 0 7px -7px;
}

.spaced {
  margin-top: 16px;
}

.content {
  flex: 1;
  display: flex;
  flex-direction: column;
  align-items: center;
  padding: 63px 222px 0 0;
}

.sort {
  height: 20px;
  padding: 0 5px;
  border: 2px outset #444;
  border-radius: 5px;
  background: #efefef;
  color: #000;
  font-size: 12px;
  font-weight: 700;
}

.tasks {
  width: 84%;
  margin-top: 14px;
  border-spacing: 2px;
  table-layout: fixed;
  background: #fff;
  box-shadow: 0 2px 7px rgba(0, 0, 0, 0.35);
  color: #000;
  text-align: center;
}

.col-name {
  width: 98px;
}

.col-task {
  width: 110px;
}

.tasks th {
  height: 39px;
  padding: 0;
  background: #f7d667;
  font-size: 22px;
}

.tasks td {
  height: 30px;
  padding: 0;
  background: #fff6de;
  font-size: 14px;
  font-weight: 700;
}

.tasks .remove {
  background: #37801f;
  color: #fff;
}

.remove button {
  width: 100%;
  height: 30px;
}
```
